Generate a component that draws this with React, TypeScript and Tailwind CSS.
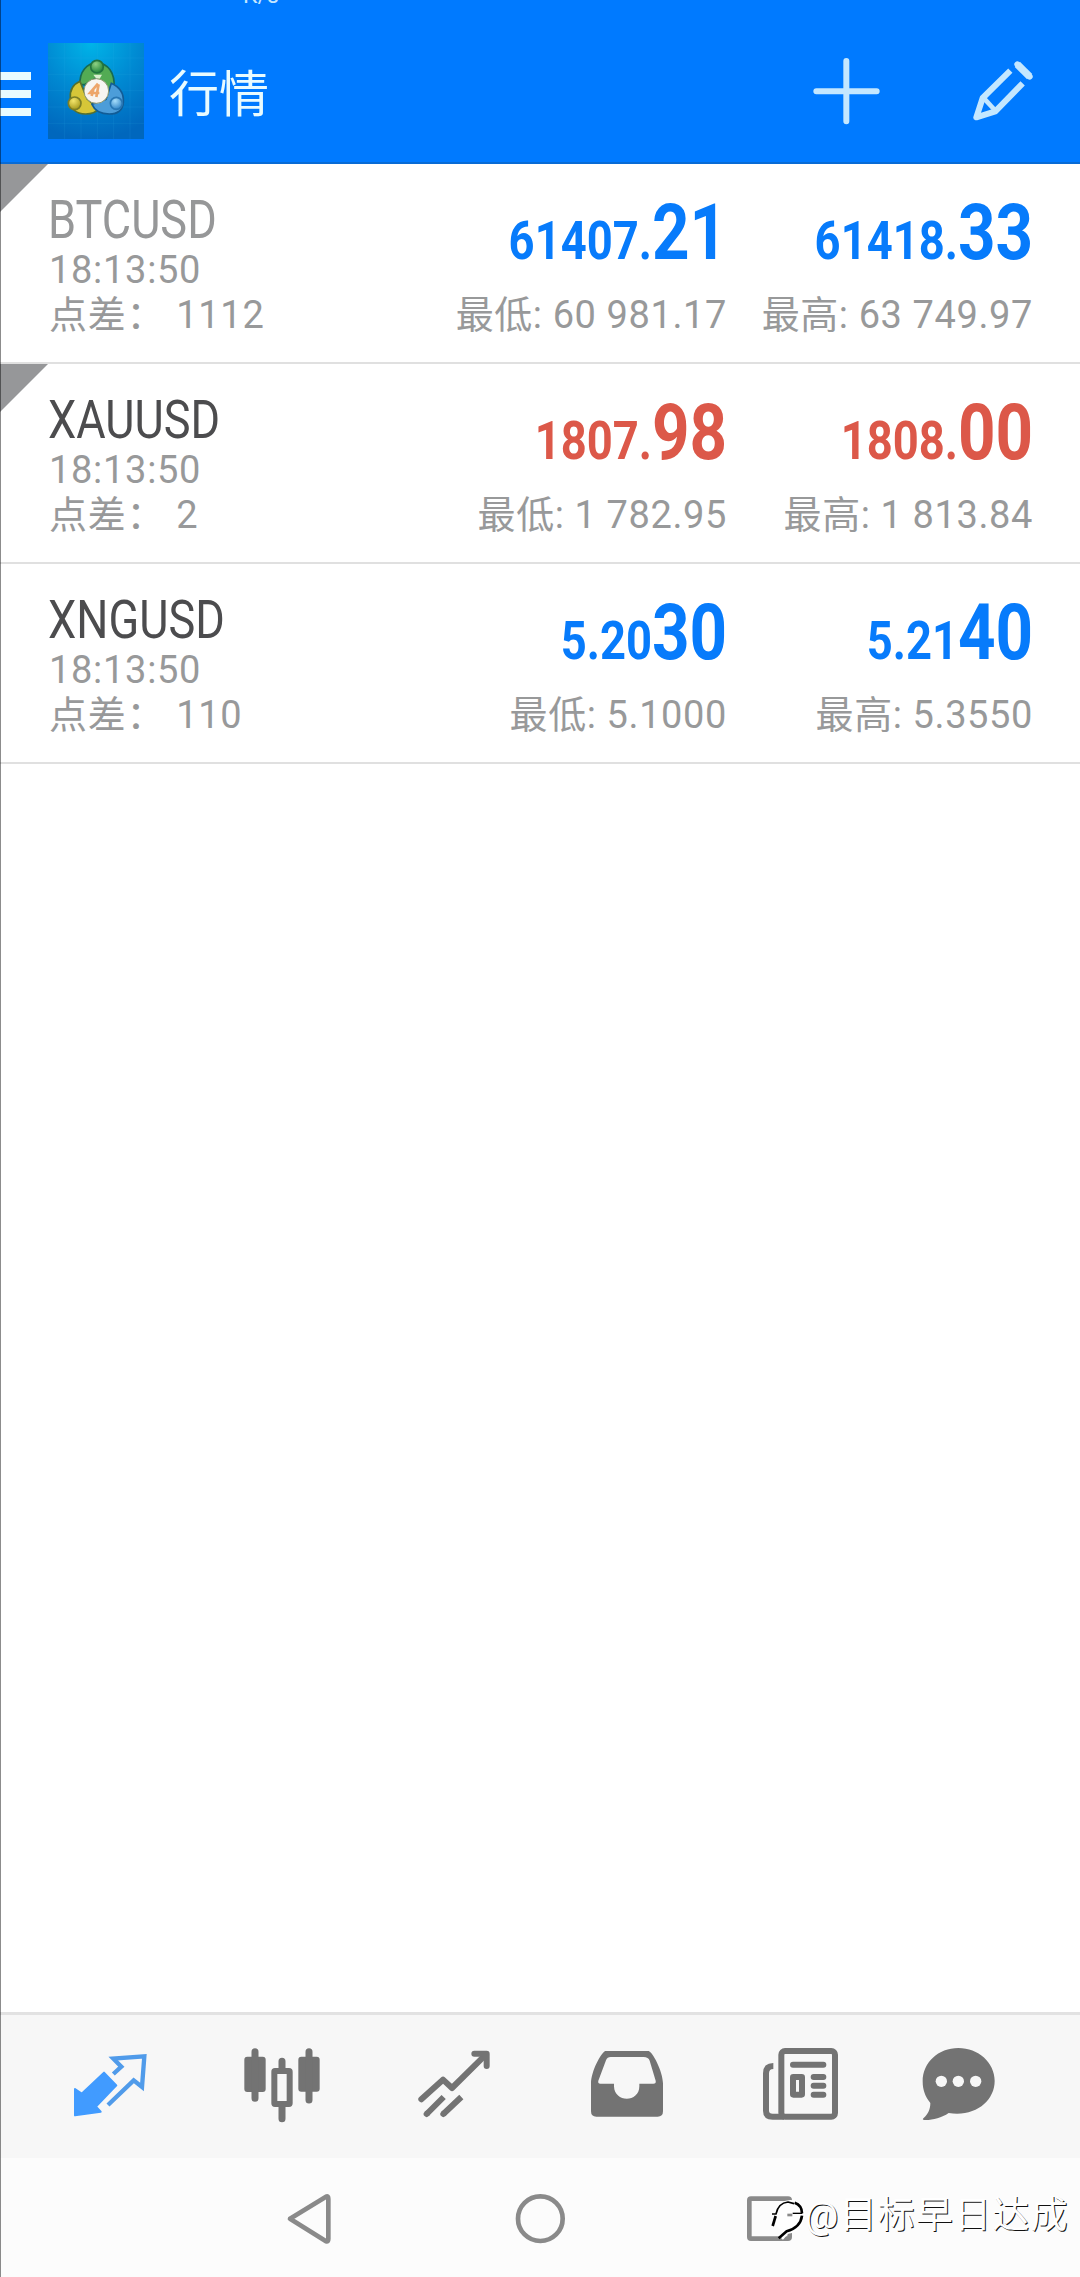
import type { ReactNode } from "react";

type Quote = {
  symbol: string;
  time: string;
  spread: string;
  bid: [string, string];
  ask: [string, string];
  low: string;
  high: string;
  color: string;
  symbolColor: string;
  flagged: boolean;
};

const quotes: Quote[] = [
  {
    symbol: "BTCUSD",
    time: "18:13:50",
    spread: "1112",
    bid: ["61407.", "21"],
    ask: ["61418.", "33"],
    low: "60 981.17",
    high: "63 749.97",
    color: "text-[#077bfb]",
    symbolColor: "text-[#969798]",
    flagged: true,
  },
  {
    symbol: "XAUUSD",
    time: "18:13:50",
    spread: "2",
    bid: ["1807.", "98"],
    ask: ["1808.", "00"],
    low: "1 782.95",
    high: "1 813.84",
    color: "text-[#dc5849]",
    symbolColor: "text-[#4c4c4e]",
    flagged: true,
  },
  {
    symbol: "XNGUSD",
    time: "18:13:50",
    spread: "110",
    bid: ["5.20", "30"],
    ask: ["5.21", "40"],
    low: "5.1000",
    high: "5.3550",
    color: "text-[#077bfb]",
    symbolColor: "text-[#4c4c4e]",
    flagged: false,
  },
];

function Price({ parts, label, color }: { parts: [string, string]; label: string; color: string }) {
  return (
    <div className="-mr-px flex flex-col items-end whitespace-nowrap">
      <div className={`h-[114px] origin-right scale-x-[0.84] text-[54px] leading-[154px] font-bold ${color}`}>
        {parts[0]}
        <span className="text-[78px] leading-[100px]">{parts[1]}</span>
      </div>
      <div className="text-[38px] leading-[74px] tracking-[0.6px] text-[#98999a]">{label}</div>
    </div>
  );
}

function QuoteRow({ quote }: { quote: Quote }) {
  return (
    <li className="relative flex h-[200px] border-b-2 border-[#e0e0e0] pr-12 pl-12">
      {quote.flagged && (
        <svg className="absolute top-0 left-0 h-12 w-12" viewBox="0 0 48 48" fill="#969799">
          <path d="M0 0h48L0 48z" />
        </svg>
      )}
      <div className="w-[372px] whitespace-nowrap">
        <div className={`h-[87px] origin-left scale-x-[0.835] text-[54px] leading-[111px] ${quote.symbolColor}`}>
          {quote.symbol}
        </div>
        <div className="h-[38px] pl-px text-[38px] leading-[38px] tracking-[0.7px] text-[#98999a]">{quote.time}</div>
        <div className="pl-px text-[38px] leading-[52px] tracking-[0.7px] text-[#98999a] [word-spacing:1px]">
          点差： {quote.spread}
        </div>
      </div>
      <div className="flex w-[306px] justify-end">
        <Price parts={quote.bid} label={`最低: ${quote.low}`} color={quote.color} />
      </div>
      <div className="flex w-[306px] justify-end">
        <Price parts={quote.ask} label={`最高: ${quote.high}`} color={quote.color} />
      </div>
    </li>
  );
}

function Logo() {
  return (
    <svg className="h-24 w-24" viewBox="24 27 288 288">
      <defs>
        <radialGradient id="sky" cx="0.45" cy="0" r="1">
          <stop offset="0" stopColor="#00b4e8" />
          <stop offset="0.5" stopColor="#0089d2" />
          <stop offset="1" stopColor="#0067bd" />
        </radialGradient>
        <radialGradient id="green" cx="0.4" cy="0.3" r="0.7">
          <stop offset="0" stopColor="#8fd083" />
          <stop offset="1" stopColor="#22853a" />
        </radialGradient>
        <radialGradient id="yellow" cx="0.4" cy="0.3" r="0.7">
          <stop offset="0" stopColor="#f3e56b" />
          <stop offset="1" stopColor="#a79a1c" />
        </radialGradient>
        <radialGradient id="blue" cx="0.4" cy="0.3" r="0.7">
          <stop offset="0" stopColor="#a5dcfa" />
          <stop offset="1" stopColor="#3286c8" />
        </radialGradient>
      </defs>
      <path fill="url(#sky)" d="M24 27h288v288H24z" />
      <path
        d="M74 27v288M123 27v288M172 27v288M221 27v288M270 27v288M24 72h288M24 121h288M24 170h288M24 219h288M24 268h288"
        stroke="#35b1e5"
        strokeOpacity="0.2"
        strokeWidth="2"
      />
      <g strokeWidth="5">
        <path
          d="M120 152C118 112 140 88 171 86c32 2 55 30 51 76l-20 14-34-44-34 20z"
          fill="#53ab54"
          stroke="#176b51"
        />
        <path d="M120 142c-22 10-31 26-29 50-3 32 17 48 46 48 18 0 32-6 38-16l-34-30z" fill="#d6c638" stroke="#55702d" />
        <path d="M214 148c27 12 38 31 36 57-2 24-19 35-42 35-25 0-44-10-52-29l42-15z" fill="#4c9dd9" stroke="#125c96" />
        <circle cx="171" cy="98" r="19" fill="url(#green)" stroke="#23743f" />
        <circle cx="104" cy="208" r="19" fill="url(#yellow)" stroke="#7b7d26" />
        <circle cx="229" cy="208" r="18" fill="url(#blue)" stroke="#2876b3" />
      </g>
      <path d="M160 122h26l-7 12h-10z" fill="#d9f0cf" />
      <circle cx="169" cy="171" r="37" fill="#f7f5f1" stroke="#8f9a72" strokeWidth="3" />
      <path d="M174 149l-24 28h28M176 151l-7 38M160 166l-5 20" fill="none" stroke="#eda66b" strokeWidth="8" />
    </svg>
  );
}

function Header() {
  return (
    <header className="flex h-[164px] flex-col border-b-2 border-[#086bd5] bg-[#007aff]">
      <div className="flex h-1 items-end overflow-hidden pl-[243px]">
        <span className="text-[23px] leading-[17px] text-[#c5e6ff]">K/s</span>
      </div>
      <div className="flex items-center pt-[39px]">
        <div className="mt-1.5 flex w-12 flex-col gap-[10px]">
          <div className="h-2 w-[31px] bg-[#e8fbff]" />
          <div className="h-2 w-[31px] bg-[#e8fbff]" />
          <div className="h-2 w-[31px] bg-[#e8fbff]" />
        </div>
        <Logo />
        <h1 className="ml-[25px] h-24 text-[50px] leading-[105px] text-[#e8fbff]">行情</h1>
        <svg
          className="mr-4 ml-auto h-[70px] w-[254px]"
          viewBox="150 80 762 210"
          stroke="#c4e7ff"
          strokeWidth="18"
          fill="none"
          strokeLinecap="round"
        >
          <path d="M259 95v181M169 186h181" />
          <g strokeLinecap="butt" strokeLinejoin="round">
            <path d="M751 124L668 206 649 264l57-18 82-84" />
            <path d="M672 207l35 38" strokeWidth="14" />
            <path d="M772 105l37 37" strokeWidth="22" />
            <path d="M772 105l37 37" strokeLinecap="round" />
          </g>
        </svg>
      </div>
    </header>
  );
}

function Tab({ viewBox, children }: { viewBox: string; children: ReactNode }) {
  return (
    <svg className="h-[143px] w-[172px]" viewBox={viewBox} fill="none" stroke="#737373" strokeWidth="18">
      {children}
    </svg>
  );
}

function TabBar() {
  return (
    <nav className="flex h-[146px] border-t-[3px] border-[#e2e2e2] bg-[#f7f7f7] pl-6">
      <Tab viewBox="72 45 516 429">
        <path
          d="M225 267l20 14 67-63 37 38-61 64 14 15-77 11z"
          fill="#419bff"
          stroke="#419bff"
          strokeWidth="6"
          strokeLinejoin="round"
        />
        <path d="M340 222l24-22-24-24 93-7-7 92-25-20-77 74" stroke="#509bea" strokeWidth="13" />
      </Tab>
      <Tab viewBox="588 45 516 429">
        <g fill="#737373" stroke="none">
          <rect x="733" y="170" width="64" height="106" rx="9" />
          <rect x="895" y="170" width="64" height="105" rx="9" />
        </g>
        <rect x="823" y="213" width="46" height="99" rx="2" />
        <path d="M765 155v140M927 155v145M846 184v22M846 320v36" strokeWidth="21" strokeLinecap="round" />
      </Tab>
      <Tab viewBox="24 45 516 429">
        <path d="M184 298l65-59 27 25 99-98" strokeLinejoin="round" strokeLinecap="round" />
        <path d="M343 161h37v37" strokeLinejoin="round" strokeLinecap="round" />
        <path d="M200 342l51-51M250 342l54-51" />
        <path d="M200 342l1-1M250 342l1-1" strokeLinecap="round" />
      </Tab>
      <Tab viewBox="540 45 516 429">
        <path
          d="M736 153h130c12 3 42 60 43 97v84q0 16-16 16H709q-16 0-16-16v-84c1-37 29-90 43-97zM752 171q-10 0-14 10l-23 61q-2 9 6 9h41v8c1 50 76 50 76 0v-8h42q9 0 7-9l-18-60q-4-11-18-11z"
          fill="#737373"
          fillRule="evenodd"
          stroke="none"
        />
      </Tab>
      <Tab viewBox="-24 45 516 429">
        <rect x="184" y="153" width="161" height="197" rx="11" />
        <path d="M160 198q-22 0-22 22v112q0 18 20 18h34" />
        <path d="M219 194h91M281 231h29M281 257h29M281 284h29" strokeLinecap="round" />
        <rect x="219" y="231" width="27" height="53" rx="1" />
      </Tab>
      <Tab viewBox="492 45 516 429">
        <path
          d="M715 144c60 0 109 44 109 99 0 60-59 109-138 96-22 15-50 22-73 21q-8-1-2-6c14-12 20-27 20-45-15-18-23-39-23-65 0-56 47-100 107-100z"
          fill="#737373"
          stroke="none"
        />
        <g fill="#f7f7f7" stroke="none">
          <circle cx="664" cy="244" r="17" />
          <circle cx="715" cy="244" r="17" />
          <circle cx="767" cy="244" r="17" />
        </g>
      </Tab>
    </nav>
  );
}

function SystemBar() {
  return (
    <div className="relative h-[119px] bg-[#fcfcfc]">
      <svg
        className="h-[119px] w-[1080px]"
        viewBox="0 474 3240 357"
        fill="none"
        stroke="#8a8a8a"
        strokeWidth="14"
        strokeLinejoin="round"
      >
        <path d="M870 656l108-66q7-3 7 7v120q0 9-7 7z" />
        <circle cx="1621" cy="656" r="67" />
        <rect x="2248" y="596" width="121" height="120" rx="5" />
        <path
          d="M2326 668c-10-26 10-62 44-64 33 0 44 20 40 44-5 30-23 47-48 50l-14 16 6-16z"
          fill="#fff"
          stroke="#fff"
          strokeWidth="8"
        />
        <g stroke="#000">
          <path d="M2316 642h12c4-20 16-34 36-36l18 5" strokeWidth="5" />
          <path d="M2327 648l-9 30" strokeWidth="8" />
          <path d="M2384 608c14 5 22 15 22 32M2406 647c-3 24-20 40-46 47l-24 21" strokeWidth="8" />
          <path d="M2378 640h29" strokeWidth="4" />
        </g>
        <path d="M2362 645h15" strokeWidth="8" />
      </svg>
      <span className="absolute top-[31px] left-[805px] text-[37px] leading-[54px] tracking-[1.2px] whitespace-nowrap text-white [text-shadow:1px_1px_0_#111]">
        @目标早日达成
      </span>
    </div>
  );
}

export default function App() {
  return (
    <div className="relative flex h-[2277px] w-[1080px] flex-col overflow-hidden bg-white font-['Roboto','Noto_Sans_CJK_SC',sans-serif]">
      <Header />
      <ul className="flex-1">
        {quotes.map((quote) => (
          <QuoteRow key={quote.symbol} quote={quote} />
        ))}
      </ul>
      <TabBar />
      <SystemBar />
      <div className="absolute inset-y-0 left-0 w-px bg-black/45" />
    </div>
  );
}
